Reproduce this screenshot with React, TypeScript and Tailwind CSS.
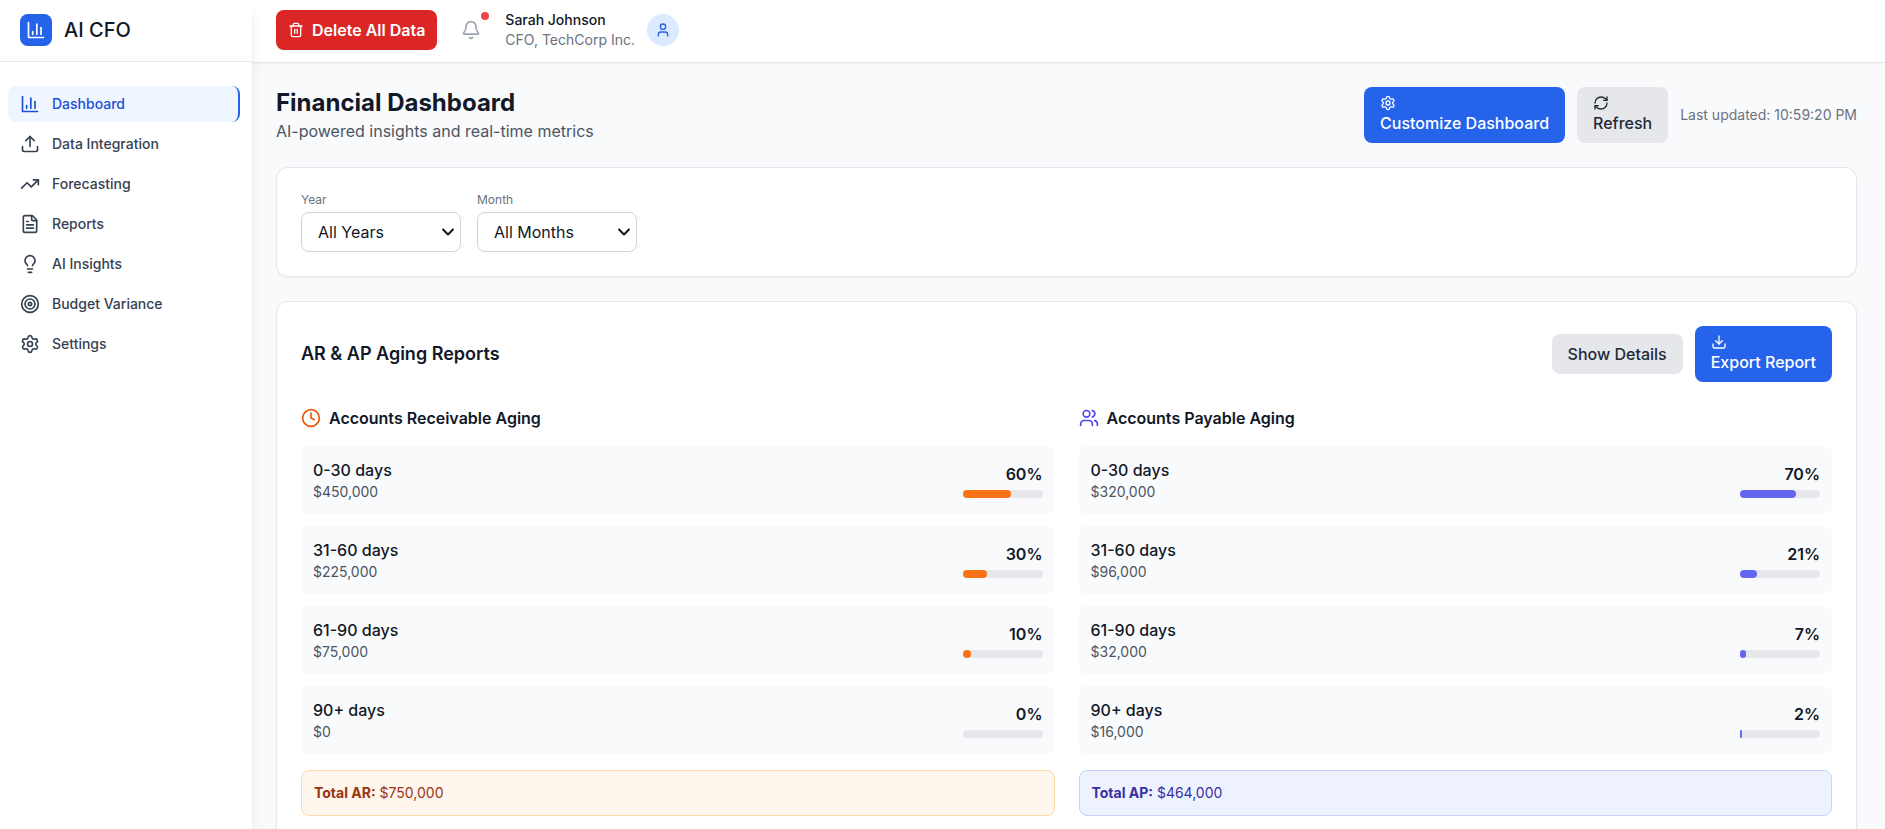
import type { ReactNode } from "react";
import {
  Bell,
  ChevronDown,
  Clock,
  Download,
  FileText,
  Lightbulb,
  RefreshCw,
  Settings,
  Target,
  Trash2,
  TrendingUp,
  Upload,
  User,
  Users,
  type LucideIcon,
} from "lucide-react";

function BarChartIcon({ className }: { className?: string }) {
  return (
    <svg
      className={className}
      viewBox="0 0 24 24"
      fill="none"
      stroke="currentColor"
      strokeWidth="2"
      strokeLinecap="round"
      strokeLinejoin="round"
      aria-hidden="true"
    >
      <path d="M3 3v18h18" />
      <path d="M18 17V9" />
      <path d="M13 17V5" />
      <path d="M8 17v-3" />
    </svg>
  );
}

const navItems: { label: string; icon: LucideIcon | typeof BarChartIcon; active?: boolean }[] = [
  { label: "Dashboard", icon: BarChartIcon, active: true },
  { label: "Data Integration", icon: Upload },
  { label: "Forecasting", icon: TrendingUp },
  { label: "Reports", icon: FileText },
  { label: "AI Insights", icon: Lightbulb },
  { label: "Budget Variance", icon: Target },
  { label: "Settings", icon: Settings },
];

type Bucket = { range: string; amount: string; percent: number };

const receivable: Bucket[] = [
  { range: "0-30 days", amount: "$450,000", percent: 60 },
  { range: "31-60 days", amount: "$225,000", percent: 30 },
  { range: "61-90 days", amount: "$75,000", percent: 10 },
  { range: "90+ days", amount: "$0", percent: 0 },
];

const payable: Bucket[] = [
  { range: "0-30 days", amount: "$320,000", percent: 70 },
  { range: "31-60 days", amount: "$96,000", percent: 21 },
  { range: "61-90 days", amount: "$32,000", percent: 7 },
  { range: "90+ days", amount: "$16,000", percent: 2 },
];

function Sidebar() {
  return (
    <aside className="z-10 w-[252px] shrink-0 bg-white shadow-lg">
      <div className="flex items-center gap-3 border-b border-[#e5e7eb] pt-[14px] pb-[15px] pl-5">
        <div className="flex size-8 items-center justify-center rounded-lg bg-[#2563eb] text-white">
          <BarChartIcon className="size-5" />
        </div>
        <span className="text-xl font-medium text-[#111827]">AI CFO</span>
      </div>
      <nav className="flex flex-col gap-1 pt-6 pr-3 pl-2">
        {navItems.map(({ label, icon: Icon, active }) => (
          <a
            key={label}
            href="#"
            aria-current={active ? "page" : undefined}
            className={
              active
                ? "flex items-center gap-3 rounded-lg border-r-2 border-[#2563eb] bg-[#eff6ff] px-3 py-2 text-sm font-medium text-[#1d4ed8]"
                : "flex items-center gap-3 rounded-lg px-3 py-2 text-sm font-medium text-[#374151]"
            }
          >
            <Icon className="size-5" />
            {label}
          </a>
        ))}
      </nav>
    </aside>
  );
}

function Topbar() {
  return (
    <header className="flex items-center gap-4 border-b border-[#e5e7eb] bg-white pt-[10px] pr-6 pb-3 pl-6 shadow-xs">
      <button
        type="button"
        className="flex items-center gap-2 rounded-lg bg-[#dc2626] px-3 py-2 font-semibold text-white shadow-xs"
      >
        <Trash2 className="size-4" />
        Delete All Data
      </button>
      <button type="button" aria-label="Notifications" className="relative p-2 text-[#9ca3af]">
        <Bell className="size-5" />
        <span className="absolute top-0 right-0 size-2 rounded-full bg-[#ef4444]" />
      </button>
      <div className="flex items-center gap-3">
        <div className="text-sm">
          <p className="font-medium text-[#111827]">Sarah Johnson</p>
          <p className="text-[#6b7280]">CFO, TechCorp Inc.</p>
        </div>
        <div className="flex size-8 items-center justify-center rounded-full bg-[#dbeafe] text-[#2563eb]">
          <User className="size-4" />
        </div>
      </div>
    </header>
  );
}

function Card({ children }: { children: ReactNode }) {
  return (
    <section className="rounded-xl border border-[#e5e7eb] bg-white p-6 shadow-xs">{children}</section>
  );
}

function FilterSelect({ id, label, option }: { id: string; label: string; option: string }) {
  return (
    <div className="flex w-40 flex-col gap-1">
      <label htmlFor={id} className="text-xs text-[#6b7280]">
        {label}
      </label>
      <div className="relative">
        <select
          id={id}
          className="h-10 w-full appearance-none rounded-lg border border-[#d1d5db] bg-white px-4 text-[#111827]"
        >
          <option>{option}</option>
        </select>
        <ChevronDown
          strokeWidth={2.5}
          className="pointer-events-none absolute top-[10px] right-[3px] size-5 text-[#111827]"
        />
      </div>
    </div>
  );
}

function AgingColumn(props: {
  title: string;
  icon: ReactNode;
  buckets: Bucket[];
  barClass: string;
  totalClass: string;
  totalLabel: string;
  total: string;
}) {
  return (
    <div>
      <h3 className="mb-4 flex items-center gap-2 font-semibold text-[#111827]">
        {props.icon}
        {props.title}
      </h3>
      <ul className="flex flex-col gap-3">
        {props.buckets.map((bucket) => (
          <li key={bucket.range} className="flex items-center justify-between rounded-lg bg-[#f9fafb] p-3">
            <div>
              <p className="font-medium text-[#111827]">{bucket.range}</p>
              <p className="text-sm text-[#4b5563]">{bucket.amount}</p>
            </div>
            <div className="w-20">
              <p className="text-right font-semibold text-[#111827]">{bucket.percent}%</p>
              <div className="mt-1 h-2 rounded-full bg-[#e5e7eb]">
                <div className={props.barClass} style={{ width: `${bucket.percent}%` }} />
              </div>
            </div>
          </li>
        ))}
      </ul>
      <p className={props.totalClass}>
        <strong className="font-bold">{props.totalLabel}</strong> {props.total}
      </p>
    </div>
  );
}

export default function App() {
  return (
    <div className="flex h-screen overflow-hidden bg-[#f9fafb] font-['Inter',sans-serif] text-base text-[#111827]">
      <Sidebar />
      <div className="flex min-w-0 flex-1 flex-col">
        <Topbar />
        <main className="flex min-h-0 flex-1 flex-col gap-6 overflow-hidden border-r-5 border-[#fcfcfc] p-6 pr-[23px]">
          <div className="flex items-center justify-between">
            <div>
              <h1 className="text-2xl font-bold">Financial Dashboard</h1>
              <p className="text-[#4b5563]">AI-powered insights and real-time metrics</p>
            </div>
            <div className="flex items-center gap-3">
              <button
                type="button"
                className="rounded-lg bg-[#2563eb] px-4 py-2 text-left font-medium text-white"
              >
                <Settings className="size-4" />
                Customize Dashboard
              </button>
              <button
                type="button"
                className="rounded-lg bg-[#e5e7eb] px-4 py-2 text-left font-medium text-[#1f2937]"
              >
                <RefreshCw className="size-4" />
                Refresh
              </button>
              <span className="text-sm text-[#6b7280]">Last updated: 10:59:20 PM</span>
            </div>
          </div>

          <Card>
            <div className="flex gap-4">
              <FilterSelect id="year" label="Year" option="All Years" />
              <FilterSelect id="month" label="Month" option="All Months" />
            </div>
          </Card>

          <Card>
            <div className="mb-6 flex items-center justify-between">
              <h2 className="text-lg font-semibold">AR &amp; AP Aging Reports</h2>
              <div className="flex items-center gap-3">
                <button
                  type="button"
                  className="rounded-lg bg-[#e5e7eb] px-4 py-2 font-medium text-[#1f2937]"
                >
                  Show Details
                </button>
                <button
                  type="button"
                  className="rounded-lg bg-[#2563eb] px-4 py-2 text-left font-medium text-white"
                >
                  <Download className="size-4" />
                  Export Report
                </button>
              </div>
            </div>
            <div className="grid grid-cols-2 gap-6">
              <AgingColumn
                title="Accounts Receivable Aging"
                icon={<Clock className="size-5 text-[#ea580c]" />}
                buckets={receivable}
                barClass="h-2 rounded-full bg-[#f97316]"
                totalClass="mt-4 rounded-lg border border-[#fed7aa] bg-[#fff7ed] p-3 text-sm text-[#9a3412]"
                totalLabel="Total AR:"
                total="$750,000"
              />
              <AgingColumn
                title="Accounts Payable Aging"
                icon={<Users className="size-5 text-[#4f46e5]" />}
                buckets={payable}
                barClass="h-2 rounded-full bg-[#6366f1]"
                totalClass="mt-4 rounded-lg border border-[#c7d2fe] bg-[#eef2ff] p-3 text-sm text-[#3730a3]"
                totalLabel="Total AP:"
                total="$464,000"
              />
            </div>
          </Card>
        </main>
      </div>
    </div>
  );
}
